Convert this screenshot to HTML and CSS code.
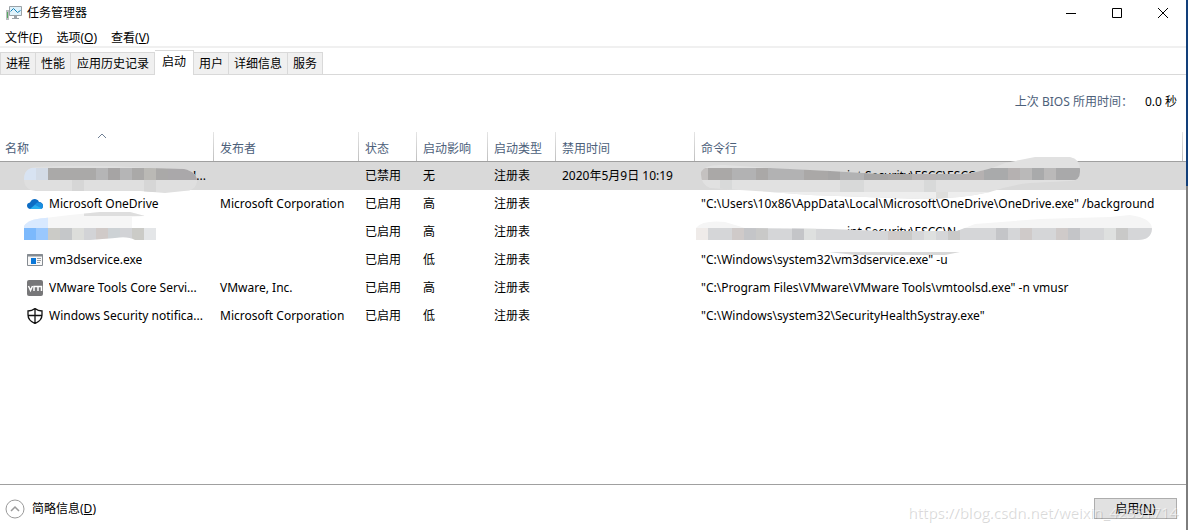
FILE: index.html
```html
<!DOCTYPE html>
<html lang="zh-CN">
<head>
<meta charset="utf-8">
<title>任务管理器</title>
<link rel="stylesheet" href="styles.css">
</head>
<body>
<div class="desktop">
<main class="window">
  <header class="titlebar">
    <svg class="app-icon" width="16" height="16" viewBox="0 0 16 16">
      <path d="M0 5h3v10H0z" fill="#b9bdbf"/>
      <path d="M1.500 7v6" stroke="#55a860"/>
      <path d="M3.500 1.500h12v9h-12z" fill="#dff2fb" stroke="#9aa2a7"/>
      <path d="M4.500 6.500l3-3 4 4 3-2" fill="none" stroke="#1583b8"/>
      <path d="M8 11h3v2h2v1H6v-1h2z" fill="#9aa2a7"/>
    </svg>
    <h1 class="title">任务管理器</h1>
    <button class="caption" aria-label="最小化"><svg width="12" height="12"><path d="M1 6.500h10" stroke="#000"/></svg></button>
    <button class="caption" aria-label="最大化"><svg width="12" height="12"><path d="M1.500 1.500h9v9h-9z" fill="none" stroke="#000"/></svg></button>
    <button class="caption" aria-label="关闭"><svg width="12" height="12"><path d="M1 1l10 10M11 1L1 11" stroke="#000"/></svg></button>
  </header>
  <nav class="menubar">
    <button class="menu">文件(<u>F</u>)</button>
    <button class="menu">选项(<u>O</u>)</button>
    <button class="menu">查看(<u>V</u>)</button>
  </nav>
  <div class="tabs" role="tablist">
    <button class="tab" role="tab">进程</button>
    <button class="tab" role="tab">性能</button>
    <button class="tab tab-history" role="tab">应用历史记录</button>
    <button class="tab tab-active" role="tab" aria-selected="true">启动</button>
    <button class="tab" role="tab">用户</button>
    <button class="tab" role="tab">详细信息</button>
    <button class="tab" role="tab">服务</button>
  </div>
  <div class="bios"><span class="bios-label">上次 BIOS 所用时间：</span><span>0.0 秒</span></div>
  <section class="list">
    <table class="grid">
      <colgroup><col class="c-name"><col class="c-pub"><col class="c-state"><col class="c-impact"><col class="c-type"><col class="c-time"><col></colgroup>
      <thead>
        <tr>
          <th>名称<svg class="sort" width="10" height="6" viewBox="0 0 10 6"><path d="M1 5l4-4 4 4" fill="none" stroke="#6f7f94"/></svg></th>
          <th>发布者</th><th>状态</th><th>启动影响</th><th>启动类型</th><th>禁用时间</th><th>命令行</th>
        </tr>
      </thead>
      <tbody>
        <tr class="selected">
          <td>
            <svg class="smudge" width="213" height="44" viewBox="0 162 213 44">
              <clipPath id="n1"><path d="M36 167Q90 164 150 168L184 169Q197 172 197 181Q196 191 184 191L165 193 140 191H36Q24 190 24 179 24 168 36 167z"/></clipPath>
              <text x="193" y="180" class="ink">!...</text>
              <g clip-path="url(#n1)">
                <path d="M20 160h180v36H20z" fill="#dfdfdf"/>
                <g stroke-width="12">
                  <path d="M24 174h12" stroke="#d8e3f2"/><path d="M36 174h12" stroke="#d3dbe6"/>
                  <path d="M48 174h48M132 174h12M156 174h12" stroke="#aaa9a8"/><path d="M96 174h12M120 174h12" stroke="#b5b5b6"/>
                  <path d="M108 174h12" stroke="#a6a4a4"/><path d="M144 174h12" stroke="#bab9b5"/><path d="M168 174h12M180 174h18" stroke="#aaa8aa"/>
                  <path d="M72 186h12M144 186h12" stroke="#d6d6d6"/>
                </g>
              </g>
            </svg>
          </td>
          <td></td><td>已禁用</td><td>无</td><td>注册表</td><td>2020年5月9日 10:19</td>
          <td>
            <svg class="smudge" width="400" height="48" viewBox="695 156 400 48">
              <clipPath id="c1"><path d="M701 172Q705 164 725 165L770 168 830 171 880 174H965Q990 170 1005 163L1035 157H1070Q1081 159 1080 172 1080 181 1070 181L1030 183Q1010 185 990 192 960 199 920 199L810 195 770 192 740 190 710 188Q700 184 701 172z"/></clipPath>
              <text x="847" y="180" class="ink">int Security\ESCC\ESCC</text>
              <g clip-path="url(#c1)">
                <path d="M695 156h390v46H695z" fill="#e1e1e1"/>
                <g stroke-width="12">
                  <path d="M696 174h12" stroke="#c4c1c0"/><path d="M708 174h24M756 174h12M804 174h24M888 174h24" stroke="#aaa8a7"/>
                  <path d="M732 174h24M768 174h36M840 174h24M936 174h24" stroke="#b2b2b3"/><path d="M828 174h12M864 174h24" stroke="#a6a5a5"/>
                  <path d="M912 174h24M960 174h24M1008 174h12" stroke="#b5b1b1"/><path d="M984 174h24M1032 174h12" stroke="#a9aaab"/>
                  <path d="M1020 174h12M1044 174h12" stroke="#bab9b9"/><path d="M1056 174h24" stroke="#a9a9aa"/>
                  <path d="M720 186h12M840 186h24M924 186h12" stroke="#d8d9d9"/>
                  <path d="M700 198h290" stroke="#eeeeee"/><path d="M936 198h12" stroke="#dededc"/>
                </g>
              </g>
            </svg>
          </td>
        </tr>
        <tr>
          <td><div class="item">
            <svg width="18" height="16" viewBox="0 0 18 16"><path d="M4 13Q1 12 1 9.500T4 6.500Q6 2.500 10 3.200 12.500 3.800 13 6q4 .3 4 4 0 3-3 3z" fill="#0c6cc4"/><path d="M4 13l7-6.500q6-.5 6 3.500 0 3-3 3z" fill="#1a8ee0"/><path d="M4 13l5-4 7 3.500-2 .5z" fill="#29aeee"/></svg>
            <span class="name">Microsoft OneDrive</span></div></td>
          <td>Microsoft Corporation</td><td>已启用</td><td>高</td><td>注册表</td><td></td>
          <td>"C:\Users\10x86\AppData\Local\Microsoft\OneDrive\OneDrive.exe" /background</td>
        </tr>
        <tr>
          <td>
            <svg class="smudge smudge-high" width="213" height="44" viewBox="0 206 213 44">
              <clipPath id="n3"><path d="M24 226Q28 219 45 218L70 215 100 212H130L145 216 132 217V228H156V240H135Q128 236 115 238L90 240H24z"/></clipPath>
              <g clip-path="url(#n3)">
                <path d="M20 206h140v40H20z" fill="#f6f6f6"/><path d="M84 212h60v4H84z" fill="#dedede"/><path d="M24 210h24v18H24z" fill="#d8e9ff"/>
                <g stroke-width="12">
                  <path d="M24 234h12" stroke="#7cb9fc"/><path d="M36 234h12" stroke="#9ac8fd"/><path d="M48 234h12M132 234h12" stroke="#cbcbc7"/>
                  <path d="M60 234h12" stroke="#c5c7c9"/><path d="M72 234h12" stroke="#dcddda"/><path d="M84 234h12M120 234h12" stroke="#d2d3d6"/>
                  <path d="M96 234h12" stroke="#d0cac8"/><path d="M108 234h12" stroke="#cdd2d5"/><path d="M144 234h12" stroke="#e4e6e8"/>
                </g>
              </g>
            </svg>
          </td>
          <td></td><td>已启用</td><td>高</td><td>注册表</td><td></td>
          <td>
            <svg class="smudge" width="470" height="52" viewBox="695 210 470 52">
              <clipPath id="c3"><path d="M696 228Q702 220 725 222L745 228 830 229 880 231H957L975 224 1040 219 1110 217 1130 215Q1152 218 1152 229 1151 240 1138 240H696z"/></clipPath>
              <text x="847" y="236" class="ink">int Security\ESCC\N</text>
              <g clip-path="url(#c3)">
                <path d="M695 212h460v36H695z" fill="#f5f5f5"/>
                <g stroke-width="12">
                  <path d="M696 234h12" stroke="#efebe9"/><path d="M708 234h444" stroke="#d5d6d8"/>
                  <path d="M732 234h12M888 234h12M1020 234h12M1056 234h12" stroke="#cfcac9"/><path d="M744 234h12M792 234h12M996 234h12M1068 234h12" stroke="#c4c5c8"/>
                  <path d="M756 234h12M900 234h12M948 234h12M1116 234h12" stroke="#c9c9c8"/><path d="M804 234h12M924 234h12M1104 234h12" stroke="#dee0df"/>
                </g>
              </g>
              <path d="M828 252h132l-15 3H855z" fill="#d8d8d8"/>
            </svg>
          </td>
        </tr>
        <tr>
          <td><div class="item">
            <svg width="18" height="16" viewBox="0 0 18 16"><path d="M1.500 2.500h15v11h-15z" fill="#f8f8f8" stroke="#858b91"/><path d="M1 3.500h16" stroke="#858b91" stroke-width="2"/><path d="M5 6h5v6H5z" fill="#0a77d8"/><path d="M11 6.500h4M11 8.500h4M11 10.500h3" stroke="#989da2"/></svg>
            <span class="name">vm3dservice.exe</span></div></td>
          <td></td><td>已启用</td><td>低</td><td>注册表</td><td></td>
          <td>"C:\Windows\system32\vm3dservice.exe" -u</td>
        </tr>
        <tr>
          <td><div class="item">
            <svg width="18" height="16" viewBox="0 0 18 16"><rect x="1" width="16" height="16" rx="2" fill="#777779"/><path d="M2.500 6l2 4.500 2-4.500M8 11V6.500h4V11M12 6.500h3.500V11" fill="none" stroke="#fff" stroke-width="1.500"/></svg>
            <span class="name">VMware Tools Core Servi...</span></div></td>
          <td>VMware, Inc.</td><td>已启用</td><td>高</td><td>注册表</td><td></td>
          <td>"C:\Program Files\VMware\VMware Tools\vmtoolsd.exe" -n vmusr</td>
        </tr>
        <tr>
          <td><div class="item">
            <svg width="18" height="16" viewBox="0 0 18 16"><path d="M9 .6Q12 3 16 3v4q0 5.500-7 8.500Q2 12.500 2 7V3q4 0 7-2.400zM9 1v14M2 7.500h14" fill="none" stroke="#111" stroke-width="1.300"/></svg>
            <span class="name">Windows Security notifica...</span></div></td>
          <td>Microsoft Corporation</td><td>已启用</td><td>低</td><td>注册表</td><td></td>
          <td>"C:\Windows\system32\SecurityHealthSystray.exe"</td>
        </tr>
      </tbody>
    </table>
  </section>
  <footer class="footer">
    <button class="fewer"><svg width="20" height="20" viewBox="0 0 20 20" fill="none"><circle cx="10" cy="10" r="9" stroke="#9a9a9a"/><path d="M6 12l4-4 4 4" stroke="#9a9a9a" stroke-width="1.500"/></svg><span>简略信息(<u>D</u>)</span></button>
    <button class="enable">启用(<u>N</u>)</button>
  </footer>
  <div class="watermark">https://blog.csdn.net/weixin_42351714</div>
</main>
<aside class="behind"></aside>
</div>
</body>
</html>
```
FILE: styles.css
```css
* { box-sizing: border-box; }
body { margin: 0; background: #fff; color: #000; font: 12px/16px "Noto Sans", "Noto Sans CJK SC", sans-serif; }
button { margin: 0; padding: 0; border: 0; background: none; color: inherit; font: inherit; }
svg { display: block; flex: none; }
.desktop { display: flex; min-height: 100vh; }
.window { position: relative; display: flex; flex: 1; flex-direction: column; min-width: 0; }
.behind { width: 2px; background: linear-gradient(#123f7a 186px, #7d7d7d 186px); }
.titlebar { display: flex; align-items: center; height: 25px; padding-left: 6px; }
.title { flex: 1; margin: 0; padding-left: 5px; font-size: 12px; font-weight: 400; }
.caption { display: flex; align-items: center; justify-content: center; width: 46px; height: 25px; }
.menubar { display: flex; gap: 14px; height: 23px; padding: 4px 5px 0; border-bottom: 2px solid #f0f0f0; }
.tabs { display: flex; align-items: flex-end; height: 27px; box-shadow: inset 0 -1px #d9d9d9; }
.tab { height: 23px; padding: 0 5px; border: 1px solid #d9d9d9; border-left-width: 0; background: #f0f0f0; }
.tab:first-child { border-left-width: 1px; }
.tab-history { padding: 0 5px 0 6px; }
.tab-active { height: 25px; padding: 0 7px 3px; border-bottom: 0; background: #fff; }
.bios { display: flex; justify-content: flex-end; gap: 12px; height: 57px; padding: 19px 9px 0 0; }
.bios-label, th { color: #4c607a; }
.list { flex: 1; overflow: hidden; }
.grid { width: 100%; border-collapse: separate; border-spacing: 0; table-layout: fixed; }
.c-name { width: 214px; }
.c-pub { width: 145px; }
.c-state { width: 58px; }
.c-impact { width: 71px; }
.c-type { width: 68px; }
.c-time { width: 139px; }
th { position: relative; height: 30px; padding: 5px 5px 0; border-bottom: 1px solid #a0a0a0; background: linear-gradient(#e5e5e5, #c0c0c0) right / 1px 100% no-repeat; font-weight: 400; text-align: left; }
th:last-child { background-position: right 3px top; }
td { position: relative; height: 28px; padding: 0 6px; white-space: nowrap; }
th + th { padding-left: 6px; }
.selected { background: #d9d9d9; }
.sort { position: absolute; top: 1px; left: 97px; }
.item { display: flex; align-items: center; gap: 5px; padding-left: 20px; }
.name { overflow: hidden; text-overflow: ellipsis; }
.smudge { position: absolute; left: 0; z-index: 1; }
td:first-child .smudge { top: 0; }
td:first-child .smudge-high { top: -12px; }
td:last-child .smudge { top: -8px; }
.selected td:last-child .smudge { top: -6px; }
.ink { font-size: 12px; }
.footer { display: flex; align-items: center; justify-content: space-between; height: 46px; padding: 2px 9px 0 5px; border-top: 1px solid #a0a0a0; }
.fewer { display: flex; align-items: center; gap: 7px; }
.enable { width: 83px; height: 21px; border: 1px solid #adadad; background: #e1e1e1; }
.watermark { position: absolute; right: 8px; bottom: 8px; color: rgba(255, 255, 255, .5); font: 15px/20px "Open Sans", sans-serif; text-shadow: 1px 1px rgba(120, 120, 120, .3); pointer-events: none; }
```
